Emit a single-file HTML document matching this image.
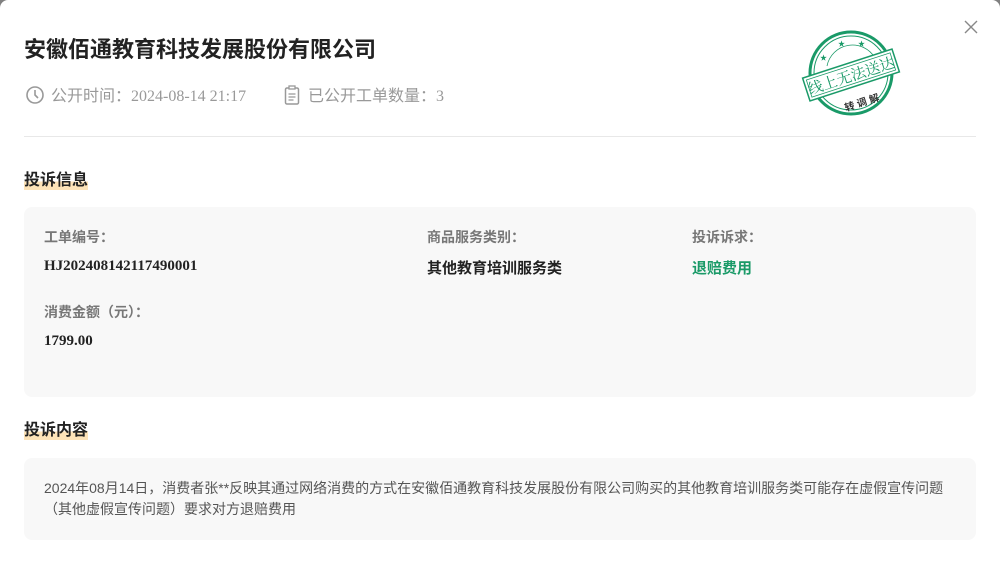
<!DOCTYPE html>
<html><head><meta charset="utf-8"><style>
*{margin:0;padding:0;box-sizing:border-box}
html,body{width:1000px;height:564px;overflow:hidden;background:#808080}
body{font-family:"Liberation Sans","Noto Sans CJK SC",sans-serif}
.m{position:absolute;left:0;top:0;width:1000px;height:564px;background:#fff;border-radius:8px 8px 0 0;overflow:hidden}
.a{position:absolute;white-space:nowrap}
.t{left:24px;top:32px;font-size:22px;font-weight:bold;color:#222}
.meta{top:82px;font-size:16px;color:#999;font-family:"Liberation Serif","Noto Sans CJK SC",serif}
.hr{left:24px;top:136px;width:952px;height:1px;background:#e8e8e8}
.sec{left:24px;font-size:16px;font-weight:bold;color:#222;background:linear-gradient(transparent 65%,#fde3b8 65%)}
.box{position:absolute;left:24px;width:952px;background:#f8f8f8;border-radius:8px}
.lb{font-size:14px;font-weight:bold;color:#777}
.v{font-size:15px;font-weight:bold;color:#222;font-family:"Liberation Serif","Noto Sans CJK SC",serif}
</style></head><body>
<div class="m">
<div class="a t">安徽佰通教育科技发展股份有限公司</div>
<svg class="a" style="left:25px;top:85px" width="20" height="20" viewBox="0 0 20 20"><circle cx="10" cy="10" r="8" fill="none" stroke="#999" stroke-width="1.6"/><path d="M10 5v5l3 3" fill="none" stroke="#999" stroke-width="1.6"/></svg>
<div class="a meta" style="left:51px">公开时间：2024-08-14 21:17</div>
<svg class="a" style="left:284px;top:85px" width="16" height="20" viewBox="0 0 16 20"><rect x="1.5" y="3" width="13" height="16" rx="1.5" fill="none" stroke="#999" stroke-width="1.5"/><rect x="5" y="1" width="6" height="3" fill="#fff" stroke="#999" stroke-width="1.3"/><path d="M4.5 9h7M4.5 12h7M4.5 15h5" stroke="#999" stroke-width="1.3"/></svg>
<div class="a meta" style="left:308px">已公开工单数量：3</div>
<svg class="a" style="left:800px;top:28px" width="104" height="90" viewBox="0 0 104 90">
<circle cx="51" cy="45" r="41" fill="none" stroke="#1a9a68" stroke-width="3"/>
<circle cx="51" cy="45" r="37" fill="none" stroke="#1a9a68" stroke-width="1"/>
<path d="M27 38 A26 26 0 0 1 75 30" fill="none" stroke="#1a9a68" stroke-width="0.8"/>
<text x="38" y="18" font-size="7" fill="#1a9a68">★</text><text x="58" y="18" font-size="7" fill="#1a9a68">★</text><text x="20" y="32" font-size="7" fill="#1a9a68">★</text>
<g transform="rotate(-18 51 47)"><rect x="4" y="35" width="94" height="24" fill="#fff" stroke="#1a9a68" stroke-width="1.5"/><rect x="7" y="38" width="88" height="18" fill="none" stroke="#1a9a68" stroke-width="0.8"/>
<text x="51" y="53" font-size="15" fill="#1a9a68" text-anchor="middle" font-family="Noto Serif CJK SC,serif">线上无法送达</text></g>
<text x="62" y="78" font-size="10" font-weight="bold" fill="#333" text-anchor="middle" transform="rotate(-18 62 75)">转 调 解</text>
</svg>
<svg class="a" style="left:964px;top:20px" width="14" height="14" viewBox="0 0 14 14"><path d="M1 1l12 12M13 1L1 13" stroke="#888" stroke-width="1.4"/></svg>
<div class="a hr"></div>
<div class="a sec" style="top:166px">投诉信息</div>
<div class="box" style="top:207px;height:190px">
<div class="a lb" style="left:20px;top:20px">工单编号：</div>
<div class="a v" style="left:20px;top:51px">HJ202408142117490001</div>
<div class="a lb" style="left:403px;top:20px">商品服务类别：</div>
<div class="a v" style="left:403px;top:50px">其他教育培训服务类</div>
<div class="a lb" style="left:668px;top:20px">投诉诉求：</div>
<div class="a v" style="left:668px;top:50px;color:#1a9a68">退赔费用</div>
<div class="a lb" style="left:20px;top:95px">消费金额（元）：</div>
<div class="a v" style="left:20px;top:126px">1799.00</div>
</div>
<div class="a sec" style="top:416px">投诉内容</div>
<div class="box" style="top:458px;height:82px">
<div style="padding:20px 20px;font-size:14px;line-height:21px;color:#555">2024年08月14日，消费者张**反映其通过网络消费的方式在安徽佰通教育科技发展股份有限公司购买的其他教育培训服务类可能存在虚假宣传问题（其他虚假宣传问题）要求对方退赔费用</div>
</div>
</div>
</body></html>
